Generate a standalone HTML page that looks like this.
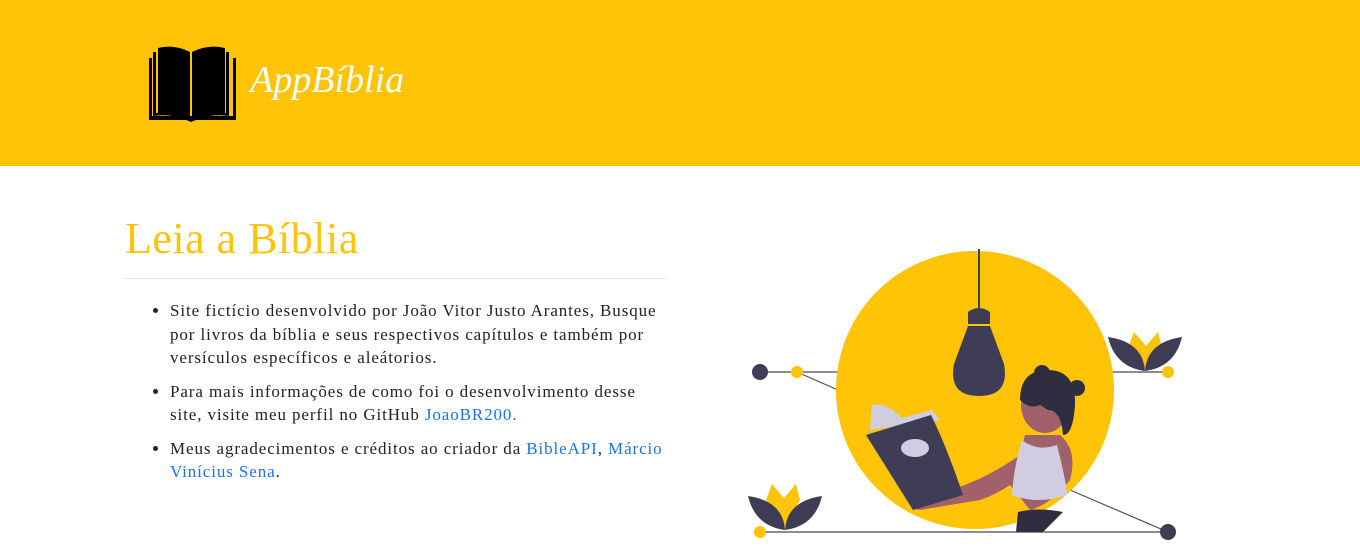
<!DOCTYPE html>
<html><head><meta charset="utf-8"><style>
body{margin:0;width:1360px;height:555px;overflow:hidden;background:#fff;font-family:"Liberation Serif",serif;position:relative}
.hd{position:absolute;left:0;top:0;width:1360px;height:166px;background:#ffc308}
.brand{position:absolute;left:250px;top:58px;font-size:38px;color:#fff;font-style:italic;font-family:"Liberation Serif",serif}
h1{position:absolute;left:125px;top:213px;margin:0;font-weight:normal;font-size:44px;color:#ffc308;letter-spacing:0.5px}
.hr{position:absolute;left:125px;top:278px;width:540px;height:1px;background:#e2e2e2}
ul{position:absolute;left:130px;top:299px;margin:0;padding-left:40px;width:500px;font-size:17px;letter-spacing:0.9px;line-height:23.5px;color:#222}
li{margin-bottom:10px}
a{color:#1a73e8;text-decoration:none}
svg{position:absolute;left:0;top:0}
</style></head><body>
<div class="hd"></div>
<svg width="1360" height="555">
<path d="M149 58 v62 h87 v-62 h-3 v58 h-81 v-58z" fill="#000"/>
<path d="M153 52 v64 q20 -3 38 6 q18 -9 38 -6 v-64 h-3 v61 q-18 -3 -35 5 q-17 -8 -35 -5 v-61z" fill="#000"/>
<path d="M158 48 q16 -4 32 4 v66 q-16 -8 -32 -4z" fill="#000"/>
<path d="M192 52 q16 -8 33 -4 v66 q-17 -4 -33 4z" fill="#000"/>
<line x1="760" y1="372" x2="838" y2="372" stroke="#8d8a9a" stroke-width="2"/>
<line x1="797" y1="372" x2="838" y2="390" stroke="#555" stroke-width="1.2"/>
<line x1="1112" y1="372" x2="1170" y2="372" stroke="#8d8a9a" stroke-width="2"/>
<line x1="760" y1="532" x2="1168" y2="532" stroke="#8d8a9a" stroke-width="2"/>
<line x1="1070" y1="490" x2="1168" y2="532" stroke="#555" stroke-width="1.2"/>
<circle cx="975" cy="390" r="139" fill="#ffc308"/>
<line x1="979" y1="249" x2="979" y2="308" stroke="#3f3d56" stroke-width="2"/>
<path d="M968 312 q11 -8 22 0 v12 h-22z" fill="#3f3d56"/>
<path d="M968 326 h22 l14 38 q6 32 -25 32 q-31 0 -25 -32z" fill="#3f3d56"/>
<circle cx="760" cy="372" r="8" fill="#3f3d56"/><circle cx="797" cy="372" r="6" fill="#ffc308"/>
<circle cx="1168" cy="372" r="6" fill="#ffc308"/><circle cx="1168" cy="532" r="8" fill="#3f3d56"/>
<circle cx="760" cy="532" r="6" fill="#ffc308"/>
<path d="M1128 348 l6 -16 l12 14 l12 -14 l4 16 l-16 22z" fill="#ffc308"/>
<path d="M1108 337 q35 5 37 34 q-30 -4 -37 -34z M1182 337 q-35 5 -37 34 q30 -4 37 -34z" fill="#3f3d56"/>
<path d="M766 500 l6 -16 l12 14 l12 -14 l4 16 l-16 28z" fill="#ffc308"/>
<path d="M748 496 q35 5 37 34 q-30 -4 -37 -34z M822 496 q-35 5 -37 34 q30 -4 37 -34z" fill="#3f3d56"/>
<path d="M1025 435 l-5 20 q-25 18 -55 30 l-50 15 q-10 8 5 10 l60 -10 q15 -5 30 -15 l20 25 q20 -5 40 -30 q8 -30 -10 -45z" fill="#a0616a"/>
<path d="M1022 440 q15 12 35 5 q10 40 10 50 q-30 10 -55 0 q2 -30 10 -55z" fill="#d0cde1"/>
<path d="M1018 512 q20 -5 45 0 l-20 20 h-27z" fill="#2f2e41"/>
<ellipse cx="1045" cy="405" rx="24" ry="28" fill="#a0616a"/>
<path d="M1020 400 q0 -30 28 -30 q28 0 27 35 q-2 30 -12 30 q-2 -25 -15 -25 l-8 -5 q-10 5 -20 -5z" fill="#2f2e41"/>
<circle cx="1042" cy="373" r="8" fill="#2f2e41"/><circle cx="1077" cy="388" r="8" fill="#2f2e41"/>
<path d="M872 405 q15 -3 30 13 l30 -8 l8 10 l-70 10z" fill="#d0cde1"/>
<path d="M866 435 l65 -20 q15 30 32 80 l-50 15z" fill="#3f3d56"/>
<ellipse cx="915" cy="448" rx="14" ry="9" fill="#d0cde1"/>
</svg>
<div class="brand">AppBíblia</div>
<h1>Leia a Bíblia</h1>
<div class="hr"></div>
<ul>
<li>Site fictício desenvolvido por João Vitor Justo Arantes, Busque por livros da bíblia e seus respectivos capítulos e também por versículos específicos e aleátorios.</li>
<li>Para mais informações de como foi o desenvolvimento desse site, visite meu perfil no GitHub <a>JoaoBR200.</a></li>
<li>Meus agradecimentos e créditos ao criador da <a>BibleAPI</a>, <a>Márcio Vinícius Sena</a>.</li>
</ul>
</body></html>
